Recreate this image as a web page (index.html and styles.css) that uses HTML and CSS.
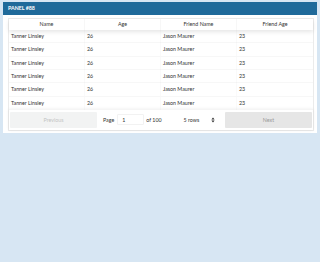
FILE: index.html
```html
<!DOCTYPE html>
<html>
<head>
<meta charset="utf-8">
<link rel="stylesheet" href="styles.css">
</head>
<body>
<div class="panel">
  <div class="panel-head">PANEL #88</div>
  <div class="panel-body">
    <div class="table">
      <div class="thead">
        <div class="th">Name</div>
        <div class="th">Age</div>
        <div class="th">Friend Name</div>
        <div class="th">Friend Age</div>
      </div>
      <div class="tbody">
        <div class="tr"><div class="td">Tanner Linsley</div><div class="td">26</div><div class="td">Jason Maurer</div><div class="td">23</div></div>
        <div class="tr"><div class="td">Tanner Linsley</div><div class="td">26</div><div class="td">Jason Maurer</div><div class="td">23</div></div>
        <div class="tr"><div class="td">Tanner Linsley</div><div class="td">26</div><div class="td">Jason Maurer</div><div class="td">23</div></div>
        <div class="tr"><div class="td">Tanner Linsley</div><div class="td">26</div><div class="td">Jason Maurer</div><div class="td">23</div></div>
        <div class="tr"><div class="td">Tanner Linsley</div><div class="td">26</div><div class="td">Jason Maurer</div><div class="td">23</div></div>
        <div class="tr"><div class="td">Tanner Linsley</div><div class="td">26</div><div class="td">Jason Maurer</div><div class="td">23</div></div>
      </div>
      <div class="pagination">
        <div class="btn prev">Previous</div>
        <div class="center">
          <span class="page">Page</span>
          <span class="input">1</span>
          <span class="of">of 100</span>
          <span class="select">5 rows <svg class="arrows" width="4" height="6" viewBox="0 0 4 6"><path d="M0.4 2.4 L2 0.6 L3.6 2.4 Z M0.4 3.6 L2 5.4 L3.6 3.6 Z" fill="#333"/></svg></span>
        </div>
        <div class="btn next">Next</div>
      </div>
    </div>
  </div>
</div>
</body>
</html>
```
FILE: styles.css
```css
html, body {
  margin: 0;
  padding: 0;
  background: #d7e6f3;
  font-family: Lato, "Open Sans", sans-serif;
  font-size: 5.3px;
  color: #333;
}
.panel {
  margin: 2px 3px 0 3px;
  background: #fff;
}
.panel-head {
  height: 13px;
  background: #1f6a9a;
  color: #fff;
  font-weight: bold;
  line-height: 13px;
  padding-left: 5px;
}
.panel-body {
  padding: 3px 3px 2px 5px;
}
.table {
  border: 1px solid rgba(0,0,0,0.08);
  display: flex;
  flex-direction: column;
}
.thead {
  display: grid;
  grid-template-columns: repeat(4, 1fr);
  height: 11px;
  box-shadow: 0 2px 4px rgba(0,0,0,0.1);
  position: relative;
}
.th {
  text-align: center;
  line-height: 11px;
  border-right: 1px solid rgba(0,0,0,0.03);
}
.th:last-child { border-right: none; }
.tr {
  display: grid;
  grid-template-columns: repeat(4, 1fr);
  height: 12.33px;
  border-bottom: 1px solid rgba(0,0,0,0.03);
}
.tr:last-child { border-bottom: none; }
.td {
  line-height: 13px;
  padding-left: 2px;
  border-right: 1px solid rgba(0,0,0,0.02);
}
.td:last-child { border-right: none; }
.pagination {
  display: flex;
  align-items: center;
  padding: 2px 1px 2px 1px;
  height: 16px;
  box-shadow: 0 0 3px rgba(0,0,0,0.08);
  border-top: 1px solid rgba(0,0,0,0.04);
}
.btn {
  width: 87px;
  height: 16px;
  line-height: 16px;
  text-align: center;
  border-radius: 1px;
}
.prev {
  background: #f2f3f3;
  color: #c4c4c4;
}
.next {
  background: #e6e6e6;
  color: #999;
}
.center {
  flex: 1;
  display: flex;
  align-items: center;
  padding-left: 6px;
}
.page { margin-right: 3px; }
.input {
  width: 27px;
  height: 11px;
  line-height: 11px;
  padding-left: 4px;
  box-sizing: border-box;
  border: 1px solid rgba(0,0,0,0.05);
  border-radius: 1px;
  margin-right: 2px;
}
.of { margin-right: 22px; }
.select {
  display: flex;
  align-items: center;
}
.arrows { margin-left: 12px; }
```
